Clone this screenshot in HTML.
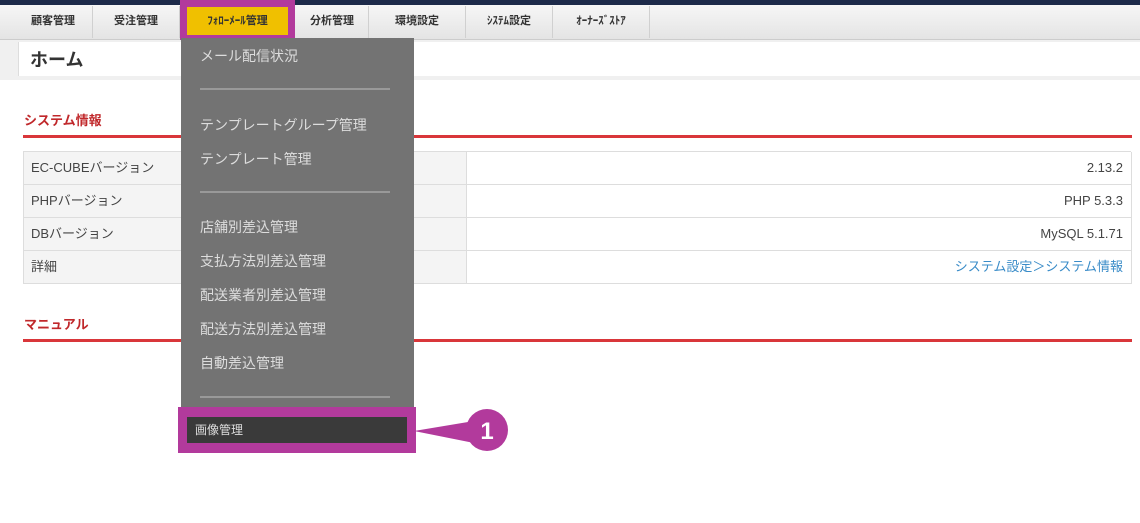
<!DOCTYPE html><html><head><meta charset="utf-8"><style>
body{margin:0;width:1140px;height:523px;background:#fff;position:relative;overflow:hidden;font-family:"Liberation Sans","Noto Sans CJK JP",sans-serif;}
.a{position:absolute}
.tab{position:absolute;top:6px;height:32px;line-height:30px;font-size:11px;color:#333;font-weight:bold;text-align:center;border-right:1px solid #d0d0d0}
.row{position:absolute;left:23px;width:1108px;height:32px;border-bottom:1px solid #ddd;font-size:13px;color:#444;line-height:32px}
.row .l{position:absolute;left:0;width:444px;height:32px;background:#f4f4f4;border-right:1px solid #ddd;padding-left:8px;box-sizing:border-box}
.row .r{position:absolute;right:8px;top:0}
.mi{position:absolute;left:200px;font-size:14px;color:#ddd}
.sep{position:absolute;left:200px;width:190px;height:2px;background:#999}
</style></head><body>
<div class="a" style="left:0;top:0;width:1140px;height:5px;background:#1d2a4a"></div>
<div class="a" style="left:0;top:5px;width:1140px;height:34px;background:linear-gradient(#f6f6f6,#e4e4e4);border-bottom:1px solid #ccc"></div>
<div class="tab" style="left:14px;width:78px">顧客管理</div>
<div class="tab" style="left:93px;width:86px">受注管理</div>
<div class="tab" style="left:296px;width:72px">分析管理</div>
<div class="tab" style="left:369px;width:96px">環境設定</div>
<div class="tab" style="left:466px;width:86px">ｼｽﾃﾑ設定</div>
<div class="tab" style="left:553px;width:96px">ｵｰﾅｰｽﾞｽﾄｱ</div>
<div class="a" style="left:180px;top:0;width:115px;height:42px;background:#b23a9c"></div>
<div class="a" style="left:187px;top:7px;width:101px;height:28px;background:#f0c000;font-size:11px;font-weight:bold;line-height:28px;text-align:center;color:#333">ﾌｫﾛｰﾒｰﾙ管理</div>
<div class="a" style="left:0;top:40px;width:1140px;height:40px;background:#f0f0f0"></div>
<div class="a" style="left:18px;top:42px;width:1122px;height:34px;background:#fff;border-left:1px solid #ddd"></div>
<div class="a" style="left:30px;top:46px;font-size:18px;font-weight:bold;color:#333">ホーム</div>
<div class="a" style="left:24px;top:110px;font-size:13px;font-weight:bold;color:#c0282b">システム情報</div>
<div class="a" style="left:23px;top:135px;width:1109px;height:3px;background:#d9363a"></div>
<div class="a" style="left:23px;top:151px;width:1108px;height:1px;background:#ddd"></div>
<div class="row" style="top:152px"><div class="l">EC-CUBEバージョン</div><div class="r">2.13.2</div></div>
<div class="row" style="top:185px"><div class="l">PHPバージョン</div><div class="r">PHP 5.3.3</div></div>
<div class="row" style="top:218px"><div class="l">DBバージョン</div><div class="r">MySQL 5.1.71</div></div>
<div class="row" style="top:251px"><div class="l">詳細</div><div class="r" style="color:#3a8cc8">システム設定＞システム情報</div></div>
<div class="a" style="left:23px;top:152px;width:1px;height:132px;background:#ddd"></div>
<div class="a" style="left:1131px;top:152px;width:1px;height:132px;background:#ddd"></div>
<div class="a" style="left:24px;top:314px;font-size:13px;font-weight:bold;color:#c0282b">マニュアル</div>
<div class="a" style="left:23px;top:339px;width:1109px;height:3px;background:#d9363a"></div>
<div class="a" style="left:181px;top:38px;width:233px;height:414px;background:#737373"></div>
<div class="mi" style="top:46px">メール配信状況</div>
<div class="sep" style="top:88px"></div>
<div class="mi" style="top:115px">テンプレートグループ管理</div>
<div class="mi" style="top:149px">テンプレート管理</div>
<div class="sep" style="top:191px"></div>
<div class="mi" style="top:217px">店舗別差込管理</div>
<div class="mi" style="top:251px">支払方法別差込管理</div>
<div class="mi" style="top:285px">配送業者別差込管理</div>
<div class="mi" style="top:319px">配送方法別差込管理</div>
<div class="mi" style="top:353px">自動差込管理</div>
<div class="sep" style="top:396px"></div>
<div class="a" style="left:178px;top:407px;width:238px;height:46px;background:#b23a9c"></div>
<div class="a" style="left:187px;top:417px;width:220px;height:26px;background:#3a3a3a;color:#ddd;font-size:12px;line-height:26px;padding-left:8px;box-sizing:border-box">画像管理</div>
<svg class="a" style="left:414px;top:405px" width="100" height="50"><polygon points="0,26 60,16 60,38" fill="#b23a9c"/><circle cx="73" cy="25" r="21" fill="#b23a9c"/><text x="73" y="34" font-size="24" font-weight="bold" fill="#fff" text-anchor="middle" font-family="Liberation Sans">1</text></svg>
</body></html>
